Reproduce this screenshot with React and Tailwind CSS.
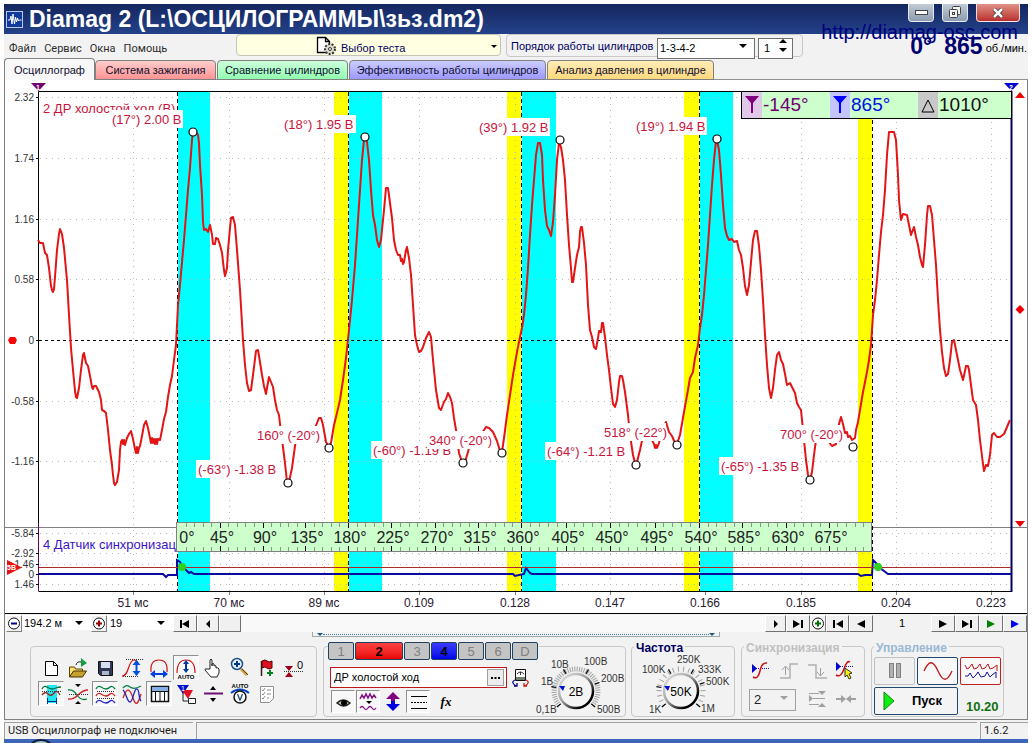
import clsx from "clsx";

const TRACE =
  "38,240 40,243 43,243 45,253 47,255 49,268 51,286 52,290 53,292 54,289 55,277 57,250 59,234 60,229 62,234 64,248 67,280 69,315 71,348 73,370 75,391 76,397 77,398 79,388 81,370 83,355 84,353 86,363 88,366 90,376 92,387 93,389 94,386 96,386 99,392 101,400 102,410 104,411 106,413 108,430 110,450 112,465 113,475 114,483 115,485 117,482 119,470 120,450 121,442 122,440 123,444 124,440 125,445 127,438 129,434 131,431 133,439 135,449 136,453 137,447 138,453 139,448 140,446 142,436 144,425 146,421 148,428 150,438 151,443 152,438 153,443 154,439 155,444 156,439 157,444 158,439 160,440 162,430 164,419 166,412 168,397 170,385 172,376 174,360 176,345 177,325 178,305 180,285 182,262 184,240 186,215 188,190 190,168 192,140 193,132 196,132 198,135 199,143 200,165 202,195 203,222 204,230 206,229 208,232 210,225 212,235 213,244 215,244 216,238 218,239 220,245 222,253 224,270 225,276 227,268 228,250 230,228 231,218 233,217 235,225 237,250 240,290 243,340 245,365 247,383 249,391 251,390 253,375 256,351 258,350 260,362 262,375 264,386 266,394 267,388 269,377 271,382 273,387 275,400 277,410 279,415 280,424 284,455 286,472 287,483 289,482 292,468 295,446 297,435 305,436 315,428 319,418 321,418 323,425 326,442 329,447 331,443 334,425 337,413 340,400 343,380 346,358 349,330 352,300 355,265 358,220 360,190 362,160 364,140 365,137 367,142 369,160 371,190 373,215 375,225 377,240 379,247 381,240 382,230 384,210 386,188 388,188 390,203 392,218 394,240 396,250 398,255 400,255 401,261 402,259 403,264 404,262 406,250 407,247 409,258 411,275 413,305 415,335 417,345 419,352 421,351 423,347 426,338 429,332 431,337 433,360 436,390 439,408 441,410 444,402 446,399 448,393 450,397 452,403 454,418 456,430 459,453 462,462 465,462 468,452 471,440 480,436 486,427 489,428 493,432 497,441 500,451 502,452 504,438 507,415 510,395 513,375 517,352 520,337 522,328 524,315 526,295 528,268 530,235 532,205 534,180 536,155 538,143 540,143 542,155 543,180 545,210 547,226 549,230 551,236 553,222 555,195 557,160 559,143 561,147 563,160 565,180 567,215 569,245 571,268 572,282 573,282 575,268 577,255 579,247 580,232 581,227 582,227 584,243 586,265 588,305 590,330 592,337 594,347 596,349 598,338 599,331 601,332 602,323 603,323 605,337 607,355 609,370 611,388 613,404 615,407 617,400 619,382 620,376 622,376 623,380 625,392 628,415 630,435 633,455 635,463 637,462 640,450 643,436 647,428 652,440 654,444 655,448 656,445 657,448 659,443 662,430 666,422 669,432 672,436 675,443 677,444 680,435 684,412 688,390 690,378 693,372 695,358 698,345 700,328 702,315 704,295 706,270 708,245 710,215 712,185 714,160 716,141 717,140 719,150 721,175 723,205 725,228 727,236 729,240 732,239 734,242 737,241 739,250 741,255 743,268 745,286 747,295 749,285 751,262 753,240 755,231 757,231 759,246 761,270 763,300 765,335 767,365 769,388 771,398 773,388 775,370 777,355 779,352 781,360 783,364 785,374 787,385 790,383 792,387 795,393 797,403 799,407 801,410 803,430 806,460 808,475 810,480 812,472 814,455 816,440 824,436 832,446 836,444 839,424 841,417 843,424 845,433 847,432 848,437 850,436 852,440 855,438 856,430 858,422 860,410 863,392 865,382 867,372 869,360 871,345 873,315 875,300 877,280 879,255 881,232 883,215 885,190 887,155 889,132 894,132 896,140 898,175 899,200 901,220 903,214 907,215 909,225 911,235 914,227 916,237 918,245 920,257 922,265 923,267 925,245 927,215 928,206 930,206 932,215 934,240 936,265 938,300 940,330 942,352 944,368 946,376 948,374 950,360 952,342 954,340 957,355 960,370 963,380 965,371 966,366 968,366 969,370 971,385 973,400 976,405 978,420 980,440 983,464 984,471 986,465 988,466 990,455 992,435 994,433 997,437 1000,437 1004,434 1007,427 1010,420";

const SYNC =
  "39,574 163,574 166,577 168,575 177,575 177,560 180,562 183,567 187,571 189,573 191,572 194,574 513,574 515,576 519,575 524,574 526,568 530,573 532,574 858,574 861,576 865,575 872,575 873,560 877,564 880,568 884,571 888,574 1011,574";

const EDGES = [177, 348, 521, 699, 872];
const CYAN = [[178, 32], [349, 33], [522, 34], [700, 33]];
const YELLOW = [[334, 14], [507, 14], [684, 15], [858, 14]];

const V_TICKS = [
  [97, "2.32"], [158, "1.74"], [219, "1.16"], [279, "0.58"], [340, "0"], [401, "-0.58"], [461, "-1.16"],
];
const SYNC_TICKS = [[533, "-5.84"], [553, "-2.92"], [564, "1.46"], [574, "0"], [584, "1.46"]];
const T_TICKS = [
  [133, "51 мс"], [229, "70 мс"], [324, "89 мс"], [419, "0.109"], [515, "0.128"],
  [610, "0.147"], [705, "0.166"], [801, "0.185"], [896, "0.204"], [991, "0.223"],
];

// x, y, width of the white plate and the text on it
const LABELS = [
  [110, 110, 73, "(17°) 2.00 В"],
  [282, 115, 74, "(18°) 1.95 В"],
  [477, 118, 73, "(39°) 1.92 В"],
  [634, 117, 73, "(19°) 1.94 В"],
  [196, 460, 82, "(-63°) -1.38 В"],
  [371, 441, 82, "(-60°) -1.19 В"],
  [545, 442, 82, "(-64°) -1.21 В"],
  [719, 457, 82, "(-65°) -1.35 В"],
  [255, 426, 64, "160° (-20°)"],
  [427, 431, 64, "340° (-20°)"],
  [602, 423, 64, "518° (-22°)"],
  [778, 425, 64, "700° (-20°)"],
];

const MARKS = [
  [193, 132], [365, 137], [560, 140], [717, 139], [288, 483], [329, 448],
  [463, 463], [502, 453], [636, 465], [677, 445], [810, 480], [853, 447],
];

const degToX = (deg) => {
  const i = Math.min(3, Math.floor(deg / 180));
  return Math.round(EDGES[i] + ((EDGES[i + 1] - EDGES[i]) * (deg - i * 180)) / 180);
};

const Ruler = () => {
  const ticks = Array.from({ length: 79 }, (_, i) => (i + 1) * 9);
  const names = Array.from({ length: 16 }, (_, i) => i * 45);
  return (
    <g>
      <rect x="176.5" y="522.5" width="695" height="29" fill="#ccffcc" stroke="#808080" />
      {ticks.map((d) => {
        const len = d % 45 === 0 ? 5 : 4;
        const color = d % 45 === 0 ? "#000" : "#8a9a8a";
        return (
          <path key={d} d={`M${degToX(d) + 0.5} 523v${len}M${degToX(d) + 0.5} 551v-${len}`} stroke={color} />
        );
      })}
      {names.map((d) => (
        <text key={d} x={d === 0 ? 187 : degToX(d) + 2} y="543" fontSize="16" textAnchor="middle" fill="#222">
          {d}°
        </text>
      ))}
    </g>
  );
};

const Chart = () => (
  <svg viewBox="5 80 1022 533" className="block w-full font-['Liberation_Sans',sans-serif]">
    {CYAN.map(([x, w]) => <rect key={x} x={x} y="92" width={w} height="499" fill="#00ffff" />)}
    {YELLOW.map(([x, w]) => <rect key={x} x={x} y="92" width={w} height="499" fill="#ffff00" />)}
    <g stroke="#b8b8b8" strokeDasharray="1 5" shapeRendering="crispEdges">
      {V_TICKS.filter(([y]) => y !== 340).map(([y]) => <path key={y} d={`M40 ${y + 0.5}H1011`} />)}
      {SYNC_TICKS.filter(([y]) => y !== 574).map(([y]) => <path key={y} d={`M40 ${y + 0.5}H1011`} />)}
      {T_TICKS.map(([x]) => <path key={x} d={`M${x + 0.5} 92V591`} />)}
    </g>
    <path d="M5 527.5H1027" stroke="#808080" />
    <path d="M39 340.5H1011" stroke="#000" strokeDasharray="3 3" />
    {EDGES.map((x) => <path key={x} d={`M${x + 0.5} 92V591`} stroke="#000" strokeDasharray="4 3" />)}
    <path d="M38.5 591V91.5H1011M38.5 591.5H1011" stroke="#000" fill="none" />
    <path d="M38.5 523V591" stroke="#600060" />
    <path d="M1011.5 91V592" stroke="#000060" strokeWidth="2" />

    <g fontSize="10" fill="#333" textAnchor="end">
      {[...V_TICKS, ...SYNC_TICKS].map(([y, t]) => (
        <g key={y}>
          <text x="34" y={y + 4}>{t}</text>
          <path d={`M36 ${y + 0.5}h3`} stroke="#000" />
        </g>
      ))}
    </g>
    <g fontSize="12" fill="#2a2030" textAnchor="middle">
      {T_TICKS.map(([x, t]) => (
        <g key={x}>
          <path d={`M${x + 0.5} 592v3`} stroke="#808080" />
          <text x={x} y="607">{t}</text>
        </g>
      ))}
    </g>

    <text x="43" y="113" fontSize="13" fill="#c8143c">2 ДР холостой ход (В)</text>
    <text x="43" y="549" fontSize="13" fill="#3c14c8">4 Датчик синхронизац</text>

    <polyline points={TRACE} fill="none" stroke="#e31414" strokeWidth="2" strokeLinejoin="round" />
    {LABELS.map(([x, y, w, t]) => (
      <g key={t}>
        <rect x={x} y={y} width={w} height="18" fill="#fff" />
        <text x={x + 2} y={y + 14} fontSize="13" fill="#c8143c">{t}</text>
      </g>
    ))}
    {MARKS.map(([x, y]) => <circle key={x} cx={x} cy={y} r="4" fill="#fff" stroke="#000" strokeWidth="1.2" />)}

    <polyline points={SYNC} fill="none" stroke="#0a0aa0" strokeWidth="2" />
    <path d="M39 567.5H1011" stroke="#b02828" shapeRendering="crispEdges" />
    <circle cx="182" cy="567" r="4" fill="#30d020" />
    <circle cx="878" cy="567" r="4" fill="#30d020" />
    <Ruler />

    <path d="M7 560L22 567.5L7 575z" fill="#e81010" />
    <text x="7" y="570" fontSize="7" fill="#fff" fontWeight="bold">5В</text>
    <path d="M8 340l2-3h5l2 3l-2 4h-5z" fill="#f00" />
    <path d="M31 83H46L38.5 91z" fill="#700070" />
    <text x="36" y="90" fontSize="7" fill="#fff" fontWeight="bold">1</text>
    <path d="M1004 83H1019L1011.5 91z" fill="#0000d0" />
    <text x="1009" y="90" fontSize="7" fill="#fff" fontWeight="bold">2</text>
    <path d="M1020 92l5 6h-10zM1020 305l4.500 4.500l-4.500 4.500l-4.500-4.500zM1020 527l-5-6h10z" fill="#f00000" />
  </svg>
);

const READOUTS = [
  { value: "-145°", box: "bg-[#e0c8e8]", text: "text-[#700070]", path: "M3 3h14l-6 7v10h-2v-10z", fill: "#800080", w: "w-[88px]" },
  { value: "865°", box: "bg-[#c4c4ff]", text: "text-[#0010e0]", path: "M3 3h14l-6 7v10h-2v-10z", fill: "#0000ff", w: "w-[88px]" },
  { value: "1010°", box: "bg-[#c8c8c8]", text: "text-[#101010]", path: "M10 7l6 12h-12z", fill: "none", w: "w-[93px]" },
];

const Readout = () => (
  <div className="absolute top-[11px] right-[15px] flex h-[28px] border border-black bg-[#ccffcc]">
    {READOUTS.map((r) => (
      <div key={r.value} className={clsx("flex", r.w)}>
        <div className={clsx("w-5 shrink-0", r.box)}>
          <svg width="20" height="24" viewBox="0 0 20 22">
            <path d={r.path} fill={r.fill} stroke={r.fill === "none" ? "#000" : "none"} />
          </svg>
        </div>
        <span className={clsx("pl-px text-[19px] leading-[26px]", r.text)}>{r.value}</span>
      </div>
    ))}
  </div>
);

const AppLogo = () => (
  <svg width="17" height="17" viewBox="0 0 17 17" className="mr-[6px] shrink-0">
    <rect x="0.500" y="0.500" width="16" height="16" fill="#103a9c" stroke="#b8c8f0" />
    <path d="M2 9h2l1-4 1 8 1-10 1.500 10 1-7 1 5 1-4 1 3 1-1h2" fill="none" stroke="#fff" />
  </svg>
);

const TitleBar = () => (
  <header className="flex h-[30px] items-center bg-linear-to-b from-[#14265f] to-[#24428a] pl-[2px]">
    <AppLogo />
    <h1 className="min-w-0 flex-1 truncate text-[23px] leading-[30px] font-bold text-white">
      Diamag 2 (L:\ОСЦИЛОГРАММЫ\зьз.dm2)
    </h1>
    <div className="flex gap-2 self-start pr-2">
      <button aria-label="Свернуть" className="flex h-[18px] w-[26px] items-center justify-center rounded-b border border-t-0 border-white/70 bg-linear-to-b from-[#c2ccd6] to-[#8d9cb0]">
        <svg width="13" height="6"><rect x="0.500" y="0.500" width="12" height="4" fill="#fff" stroke="#444" /></svg>
      </button>
      <button aria-label="Развернуть" className="flex h-[18px] w-[26px] items-center justify-center rounded-b border border-t-0 border-white/70 bg-linear-to-b from-[#c2ccd6] to-[#8d9cb0]">
        <svg width="13" height="13" fill="#f4f4f4" stroke="#444">
          <rect x="3.500" y="0.500" width="8" height="8" rx="1" />
          <rect x="0.500" y="3.500" width="8" height="8" rx="1" />
          <rect x="3.500" y="6.500" width="2" height="2" fill="none" />
        </svg>
      </button>
      <button aria-label="Закрыть" className="flex h-[18px] w-[44px] items-center justify-center rounded-b border border-t-0 border-white/80 bg-linear-to-b from-[#e09088] to-[#b82c2c]">
        <svg width="12" height="10"><path d="M2 1l8 8M10 1l-8 8" stroke="#333" strokeWidth="4" /><path d="M2 1l8 8M10 1l-8 8" stroke="#fff" strokeWidth="2.500" /></svg>
      </button>
    </div>
  </header>
);

const Arrow = ({ className }) => (
  <svg width="8" height="4" viewBox="0 0 8 4" className={clsx("pointer-events-none absolute", className)}>
    <path d="M0 0h8l-4 4z" fill="currentColor" />
  </svg>
);

const MenuRow = () => (
  <div className="flex h-6 items-start">
    <nav className="flex w-[232px] gap-[8px] pt-[7px] pl-[5px] text-[11px] leading-4 text-[#2c2c2c] font-['Roboto',sans-serif]">
      {["Файл", "Сервис", "Окна", "Помощь"].map((m) => (
        <button key={m}>{m}</button>
      ))}
    </nav>
    <div className="relative h-[22px] w-[265px] rounded border border-[#c4c4b8] bg-[#ffffe1]">
      <svg width="22" height="20" viewBox="0 0 22 20" className="pointer-events-none absolute top-[1px] left-[79px]">
        <path d="M1.500 1.500h8l4 4v11h-12zM9.500 1.500v4h4" fill="#fff" stroke="#000" strokeWidth="1.300" />
        <circle cx="14" cy="13" r="5" fill="#dcdcc8" stroke="#333" strokeWidth="2" strokeDasharray="2 1.500" />
        <circle cx="14" cy="13" r="1.500" fill="#fff" stroke="#333" />
      </svg>
      <select aria-label="Выбор теста" className="h-5 w-full appearance-none pl-[104px] text-[11px] text-[#000060]">
        <option>Выбор теста</option>
      </select>
      <Arrow className="top-[10px] right-[3px] h-[3px] w-[6px]" />
    </div>
    <div className="ml-[5px] flex h-[23px] w-[297px] rounded border border-[#c8c8c8] pl-1">
      <label htmlFor="order" className="w-[146px] text-[11px] leading-[22px] whitespace-nowrap text-[#000060]">
        Порядок работы цилиндров
      </label>
      <div className="relative">
        <select id="order" className="h-[21px] w-[98px] appearance-none border border-[#707070] bg-white pl-[2px] text-[11px]">
          <option>1-3-4-2</option>
        </select>
        <Arrow className="top-[9px] right-[8px]" />
      </div>
      <div className="relative ml-[3px]">
        <input aria-label="Номер цилиндра" defaultValue="1" className="h-[21px] w-[35px] border border-[#707070] bg-white pl-[5px] text-[11px]" />
        <svg width="8" height="13" className="pointer-events-none absolute top-[4px] right-[6px]">
          <path d="M0 4h8l-4-4zM0 9h8l-4 4z" />
        </svg>
      </div>
    </div>
    <div className="flex flex-1 justify-end text-[#000070]">
      <span className="mr-3 text-[23px] leading-6 font-bold">0°</span>
      <span className="text-[23px] leading-6 font-bold">865</span>
      <span className="pt-[6px] pr-px pl-[3px] text-[11px] leading-4 whitespace-nowrap text-black">об./мин.</span>
    </div>
  </div>
);

const TABS = [
  { name: "Осциллограф", style: "h-[22px] w-[91px] bg-[#f8f8f8]" },
  { name: "Система зажигания", style: "h-5 w-[121px] border-b bg-linear-to-b from-[#ffcccc] to-[#ff9494]" },
  { name: "Сравнение цилиндров", style: "ml-px h-5 w-[131px] border-b bg-linear-to-b from-[#ccffdd] to-[#90ffb0]" },
  { name: "Эффективность работы цилиндров", style: "ml-px h-5 w-[197px] border-b bg-linear-to-b from-[#ccccff] to-[#9c98ff]" },
  { name: "Анализ давления в цилиндре", style: "ml-px h-5 w-[167px] border-b bg-linear-to-b from-[#ffecb8] to-[#ffd97c]" },
];

const Tabs = () => (
  <div role="tablist" className="flex h-[22px] items-end shadow-[inset_0_-1px_0_#909090]">
    {TABS.map((t) => (
      <button
        key={t.name}
        role="tab"
        className={clsx("shrink-0 rounded-t border-x border-t border-[#808080] text-[11px] leading-[18px] whitespace-nowrap text-[#101030]", t.style)}
      >
        {t.name}
      </button>
    ))}
  </div>
);

const NavButton = ({ label, path, color = "#000", className }) => (
  <button
    aria-label={label}
    className={clsx("flex h-[17px] shrink-0 items-center justify-center border border-t-white border-l-white border-r-[#707070] border-b-[#707070] bg-[#f0f0f0]", className)}
  >
    <svg width="12" height="8" viewBox="0 0 12 8"><path d={path} fill={color} /></svg>
  </button>
);

const RoundButton = ({ label, plus, color }) => (
  <button aria-label={label} className="h-[17px] w-4 shrink-0 border border-t-white border-l-white border-r-[#808080] border-b-[#808080]">
    <svg width="14" height="15" viewBox="0 0 14 15">
      <circle cx="7" cy="7.500" r="5.500" fill="#fff" stroke="#111" />
      <path d={plus ? "M4 7.500h6M7 4.500v6" : "M4 7.500h6"} stroke={color} strokeWidth="2" />
    </svg>
  </button>
);

const ScrollRow = () => (
  <div className="flex h-[18px] items-start border-t border-black pt-px pl-px text-[11px]">
    <RoundButton label="Сжать" color="#000080" />
    <div className="relative">
      <select aria-label="Длительность" className="h-[15px] w-[69px] appearance-none bg-white pl-[2px]"><option>194.2 м</option></select>
      <Arrow className="top-[6px] right-[8px]" />
    </div>
    <RoundButton label="Растянуть" plus color="#900000" />
    <div className="relative">
      <select aria-label="Масштаб" className="h-[15px] w-[66px] appearance-none bg-white pl-[3px]"><option>19</option></select>
      <Arrow className="top-[6px] right-[8px]" />
    </div>
    <NavButton label="В начало" className="w-6" path="M1 0h2v8h-2zM10 0v8l-7-4z" />
    <NavButton label="Назад" className="w-[22px]" path="M8 0v8l-4-4z" />
    <NavButton label="Ползунок" className="w-[22px]" path="" />
    <div className="h-[17px] flex-1 bg-[#f9f9f9]" />
    <NavButton label="Вперёд" className="w-[21px]" path="M4 0v8l4-4z" />
    <NavButton label="В конец" className="w-[24px]" path="M1 0v8l7-4zM9 0h2v8h-2z" />
    <RoundButton label="Добавить кадр" plus color="#007000" />
    <NavButton label="Первый кадр" className="w-[23px]" path="M1 0h2v8h-2zM11 0v8l-7-4z" />
    <NavButton label="Предыдущий кадр" className="w-[24px]" path="M10 0v8l-8-4z" />
    <span className="w-[58px] text-center leading-[17px]">1</span>
    <NavButton label="Следующий кадр" className="w-6" path="M2 0v8l8-4z" />
    <NavButton label="Последний кадр" className="w-6" path="M1 0v8l7-4zM9 0h2v8h-2z" />
    <NavButton label="Воспроизвести" className="w-6" color="#008000" path="M2 0v8l8-4z" />
    <NavButton label="Повтор" className="w-6" color="#0000f0" path="M2 0v8l8-4z" />
  </div>
);

const Auto = ({ y }) => <text x="13" y={y} fontSize="6" fontWeight="bold" textAnchor="middle">AUTO</text>;

const TOOLS = [
  { name: "Новый", icon: <path d="M7.500 6.500h8l4 4v10h-12zM15.500 6.500v4h4" fill="#fff" stroke="#000" /> },
  { name: "Открыть", icon: <><path d="M4.500 22v-10h5l1 2h7v3" fill="#ffe070" stroke="#554400" /><path d="M4.500 22l4-6h13l-4 6z" fill="#c8a030" stroke="#443300" /><path d="M16 3l6 5-6 4z" fill="#10a040" /><path d="M11 10q1-4 5-3" fill="none" stroke="#222" /></> },
  { name: "Сохранить", icon: <><path d="M6.500 6.500h14v14h-12l-2-2z" fill="#303858" stroke="#111" /><path d="M9 7h9v6h-9z" fill="#d8e0f0" /><path d="M10 16h7v4h-7z" fill="#b0b8c8" /></> },
  { name: "Амплитуда", icon: <><path d="M7 4.500h18M4 21.500h16" stroke="#333" strokeDasharray="1 1" /><path d="M3 21c7 1 6-16 12-16q3 0 4 4" fill="none" stroke="#d01010" strokeWidth="1.200" /><path d="M17.500 5l4 5h-3v6h3l-4 5-4-5h3v-6h-3z" fill="#0050e0" /></> },
  { name: "Период", icon: <><path d="M5 17q-1-12 8-12t8 12" fill="none" stroke="#d01010" strokeWidth="1.200" /><path d="M4 19l5-4v3h8v-3l5 4-5 4v-3h-8v3z" fill="#0040e0" /></> },
  { name: "Автомасштаб", on: true, icon: <><path d="M4 18q0-13 9-13t9 13" fill="none" stroke="#d01010" strokeWidth="1.200" /><path d="M13 5l3 4h-2v5h2l-3 4-3-4h2v-5h-2z" fill="#0038a0" /><Auto y="24" /></> },
  { name: "Рука", icon: <path d="M9 14v-9q1-2 2 0v6v-2q1-1 2 0v2q1-1 2 0v2q2-1 3 1v4l-2 4h-6l-6-7q0-2 2-1z" fill="#fff" stroke="#222" transform="translate(1)" /> },
  { name: "Лупа", icon: <><path d="M14 14l6 6" stroke="#d0a040" strokeWidth="3" /><path d="M15 14l6 6" stroke="#604010" /><circle cx="10" cy="9" r="5.500" fill="#dff0ff" stroke="#205080" strokeWidth="1.500" /><path d="M7 9h6M10 6v6" stroke="#003a90" strokeWidth="2" /></> },
  { name: "Метка", icon: <><path d="M7.500 6v15" stroke="#222" strokeWidth="1.500" /><path d="M8 6q3-2 5 0t5 0v7q-3 2-5 0t-5 0z" fill="#e01020" stroke="#500" /><path d="M13 18h6M16 15v6" stroke="#008020" strokeWidth="2" /></> },
  { name: "Ноль", icon: <><path d="M4 11h8l-4 5zM4 22h8l-4-5z" fill="#a00018" /><path d="M3 16.500h19" stroke="#333" strokeDasharray="1 1" /><text x="16" y="14" fontSize="11">0</text></> },
  { name: "Фазы", on: true, icon: <><path d="M9 4h10v18h-10z" fill="#20e8f0" /><path d="M4 8q2-4 5-2t5 2 4-1 5-1" fill="none" stroke="#007040" strokeWidth="1.300" /><path d="M4 14q3-4 6-1t6-1 6 2" fill="none" stroke="#902020" strokeWidth="1.300" /><path d="M4 10.500h19" stroke="#333" strokeDasharray="1 1" /><path d="M9 20.500h10M9.500 17v6M18.500 17v6" stroke="#003090" /></> },
  { name: "Наложение", icon: <><path d="M4 13.500h20" stroke="#333" strokeDasharray="1 1" /><path d="M3 9q5-1 9 5t10 4" fill="none" stroke="#008040" strokeWidth="1.300" /><path d="M3 18q5 1 10-4t10-5" fill="none" stroke="#d02020" strokeWidth="1.300" /><path d="M10 3h6l-3 3zM10 23h6l-3-3z" /></> },
  { name: "Раздельно", on: true, icon: <><path d="M4 8q2-4 5-2t5 2 4-2 5 2" fill="none" stroke="#008040" strokeWidth="1.300" /><path d="M4 15q2-4 5-2t5 2 4-2 5 2" fill="none" stroke="#d02020" strokeWidth="1.300" /><path d="M4 22q2-4 5-2t5 2 4-2 5 2" fill="none" stroke="#2020c0" strokeWidth="1.300" /><path d="M5 10.500h17M5 17.500h17" stroke="#333" strokeDasharray="1 1" /></> },
  { name: "Вместе", icon: <><path d="M4 7q3-4 7-1t11-1" fill="none" stroke="#008040" strokeWidth="1.300" /><path d="M4 17c4-12 7-9 10 0s5 6 8-4" fill="none" stroke="#d02020" strokeWidth="1.300" /><path d="M4 9c3 2 4 12 7 12s4-14 7-13 1 9 4 12" fill="none" stroke="#2020c0" strokeWidth="1.300" /></> },
  { name: "Таблица", on: true, icon: <><path d="M5.500 5.500h17v15h-17z" fill="#fff" stroke="#111" strokeWidth="1.500" /><path d="M6 6h16v4h-16z" fill="#88b0e0" /><path d="M5 10.500h17M9.500 10v10M14 10v10M18.500 10v10" stroke="#111" /></> },
  { name: "Курсоры", icon: <><path d="M4 4h12l-6 9z" fill="#0010d0" /><path d="M9 9h11l-5 9z" fill="#e01020" /><path d="M10 12v8h5" fill="none" stroke="#222" /><path d="M15.500 17.500h7v5h-7z" fill="#fff" stroke="#222" /><text x="8" y="10" fontSize="7" fill="#fff">1</text></> },
  { name: "Смещение", icon: <><path d="M4 12.500h19" stroke="#701070" strokeWidth="2" /><path d="M10 9h6l-3-4zM10 17h6l-3 4z" /></> },
  { name: "Авторучка", icon: <><Auto y="7" /><path d="M4 12q9-7 18 0" fill="none" stroke="#0040c0" strokeWidth="2" /><circle cx="13" cy="16" r="6" fill="#fff" stroke="#111" strokeWidth="1.500" /><path d="M10.500 13l2.500 6 2.500-6" fill="none" stroke="#205080" strokeWidth="1.300" /></> },
  { name: "Отчёт", icon: <><path d="M6.500 5.500h13v12l-4 4h-9z" fill="#fff" stroke="#909090" /><path d="M8 9l1 1 2-3M8 13l1 1 2-3M8 17l1 1 2-3M13 9h4M13 13h4M13 17h2" fill="none" stroke="#888" /></> },
];

const Panel = ({ title, titleClass, className, children }) => (
  <fieldset className={clsx("relative h-[71px] shrink-0 rounded border border-[#c8c8c8]", className)}>
    {title && (
      <span className={clsx("absolute -top-[6px] left-[2px] bg-[#f2f2f2] px-[2px] text-xs leading-[14px] font-bold", titleClass)}>
        {title}
      </span>
    )}
    {children}
  </fieldset>
);

const IconButton = ({ label, on, className, children }) => (
  <button
    aria-label={label}
    className={clsx("border", on ? "border-t-[#909090] border-l-[#909090] border-r-white border-b-white bg-[#f8f8f8]" : "border-transparent", className)}
  >
    {children}
  </button>
);

const CHANNELS = [
  ["1", "w-[26px] bg-[#c4c4c4] text-[#808080]"],
  ["2", "w-[48px] bg-linear-to-b from-[#ff4040] to-[#e80000] font-bold text-black"],
  ["3", "w-[26px] bg-[#c4c4c4] text-[#808080]"],
  ["4", "w-[26px] bg-linear-to-b from-[#3838ff] to-[#0000e8] font-bold text-black"],
  ["5", "w-[26px] bg-[#c4c4c4] text-[#808080]"],
  ["6", "w-[26px] bg-[#c4c4c4] text-[#808080]"],
  ["D", "w-[26px] bg-[#c4c4c4] text-[#808080]"],
];

const Knob = ({ id, cx, cy, value, labels, ticks }) => (
  <g>
    <defs>
      <linearGradient id={id} x1="0" y1="0" x2="1" y2="1">
        <stop offset="0" stopColor="#e8e8e8" />
        <stop offset="0.450" stopColor="#a0a0a0" />
        <stop offset="0.800" stopColor="#000" />
      </linearGradient>
    </defs>
    {Array.from({ length: ticks }, (_, i) => {
      const a = -220 + (260 * i) / (ticks - 1);
      return <path key={i} d="M19.500 0h5" stroke="#a0a0a0" transform={`translate(${cx} ${cy}) rotate(${a})`} />;
    })}
    {[-220, -170, -120, -60, -20, 40].map((a) => (
      <path key={a} d="M20 0h5" stroke="#000" strokeWidth="1.200" transform={`translate(${cx} ${cy}) rotate(${a})`} />
    ))}
    <circle cx={cx} cy={cy} r="17" fill="#f4f4f4" stroke={`url(#${id})`} strokeWidth="2.500" />
    <path d={`M${cx - 17} ${cy - 5}l6 0l-2 5z`} fill="#0010d0" />
    <text x={cx} y={cy + 5} fontSize="12" textAnchor="middle">{value}</text>
    <g fontSize="10" fill="#333">
      {labels.map(([x, y, t]) => <text key={t} x={x} y={y}>{t}</text>)}
    </g>
  </g>
);

const ChannelPanel = () => (
  <Panel className="flex w-[303px]">
    <div className="-mt-[5px] ml-[4px] w-[211px] shrink-0">
      <div className="flex gap-px bg-[#f2f2f2]">
        {CHANNELS.map(([n, style]) => (
          <button key={n} className={clsx("h-[18px] rounded-xs border border-[#204060] text-[13px] leading-[15px]", style)}>{n}</button>
        ))}
      </div>
      <div className="mt-[7px] ml-[2px] flex items-center">
        <div className="flex h-[21px] w-[177px] items-center border border-[#c01818] bg-white pr-[2px]">
          <input aria-label="Название канала" defaultValue="ДР холостой ход" className="min-w-0 flex-1 pl-[3px] text-[11px]" />
          <button aria-label="Выбрать датчик" className="flex h-[17px] w-[17px] items-center justify-center border border-[#a0a0a0] bg-[#ececec]">
            <svg width="9" height="2"><path d="M0 0h2v2h-2zM3.500 0h2v2h-2zM7 0h2v2h-2z" /></svg>
          </button>
        </div>
        <button aria-label="Прибор" className="ml-1">
          <svg width="20" height="20" viewBox="0 0 20 20">
            <path d="M4.500 1.500h10v11h-10z" fill="#fff" stroke="#111" />
            <path d="M5 9h9v3h-9z" fill="#708070" />
            <path d="M6 6q3.500-4 7 0M9.500 7v-3" fill="none" stroke="#333" />
            <path d="M4 12q-5 2 1 6M3 18h3v-3" fill="none" stroke="#000080" strokeWidth="1.300" />
            <path d="M15 12q5 2-1 6M16 18h-3v-3" fill="none" stroke="#d01010" strokeWidth="1.300" />
          </svg>
        </button>
      </div>
      <div className="mt-[2px] ml-[3px] flex gap-px">
        <IconButton label="Видимость" on className="h-[23px] w-6">
          <svg width="22" height="21"><path d="M5 12q6-6 13 0q-6 6-13 0z" fill="#c0c0b0" stroke="#222" strokeWidth="1.500" /><circle cx="12" cy="12" r="3" /></svg>
        </IconButton>
        <IconButton label="Фильтр" on className="h-[23px] w-6">
          <svg width="22" height="21" fill="none"><path d="M3 8l2-4 2 3 2-4 2 4 2-4 2 4 2-3 2 3" stroke="#801080" strokeWidth="1.500" /><path d="M9 10h6l-3 3z" fill="#000" /><path d="M3 17q2-3 4 0t4 0 4 0 4 0" stroke="#801080" strokeWidth="1.300" /></svg>
        </IconButton>
        <IconButton label="Инверсия" className="h-[23px] w-6">
          <svg width="22" height="21"><path d="M11 1l7 7h-5v3h-4v-3h-5z" fill="#800080" /><path d="M11 20l7-7h-5v-3h-4v3h-5z" fill="#0000e0" /></svg>
        </IconButton>
        <IconButton label="Уровни" on className="h-[23px] w-6">
          <svg width="22" height="21"><path d="M4 5.500h16M4 17.500h16" stroke="#000" /><path d="M4 11.500h16" stroke="#000" strokeDasharray="2 1" /></svg>
        </IconButton>
        <IconButton label="Функция" className="h-[23px] w-6">
          <span className="ml-[6px] block font-['Liberation_Serif',serif] text-[13px] leading-[20px] font-bold italic">fx</span>
        </IconButton>
      </div>
    </div>
    <svg width="85" height="69" viewBox="539 647 85 69" className="shrink-0 overflow-visible font-['Liberation_Sans',sans-serif]">
      <Knob
        id="volt" cx={576} cy={691} value="2В" ticks={44}
        labels={[[536, 713, "0,1В"], [541, 685, "1В"], [551, 668, "10В"], [584, 665, "100В"], [601, 682, "200В"], [597, 713, "500В"]]}
      />
    </svg>
  </Panel>
);

const SyncIcon = ({ children }) => <svg width="24" height="22" viewBox="0 0 24 22" fill="none">{children}</svg>;

const SyncPanel = () => (
  <Panel title="Синхронизация" titleClass="text-[#c0c0c0]" className="w-[124px]">
    <div className="flex gap-[4px] pt-[13px] pl-[6px]">
      <button aria-label="Уровень"><SyncIcon><path d="M4 8.500h17" stroke="#1818d0" strokeDasharray="1 1" /><path d="M4 4v9l5-4.500z" fill="#0000d0" /><path d="M5 17q5 3 7-6t7-8" stroke="#d01010" strokeWidth="1.500" /></SyncIcon></button>
      <button aria-label="Фронт"><SyncIcon><path d="M4 18h10v-14h8" stroke="#b0b0b0" strokeWidth="1.500" /><path d="M9.500 15v-8M6 10l3.500-4 3.500 4" stroke="#a0a0a0" /></SyncIcon></button>
      <button aria-label="Спад"><SyncIcon><path d="M4 5h8v13h11" stroke="#b0b0b0" strokeWidth="1.500" /><path d="M16.500 8v8M13 12l3.500 4 3.500-4" stroke="#a0a0a0" /></SyncIcon></button>
      <button aria-label="Автоуровень"><SyncIcon><path d="M4 6.500h17" stroke="#1818d0" strokeDasharray="1 1" /><path d="M4 2v9l5-4.500z" fill="#0000d0" /><path d="M4 15q5 3 8-6t6-7" stroke="#d01010" strokeWidth="1.500" /><path d="M13 8l7 5-3 1 2 4-2 1-2-4-2 2z" fill="#fff000" stroke="#333" /></SyncIcon></button>
    </div>
    <div className="mt-[5px] ml-[7px] flex items-center">
      <div className="relative text-[#a0a0a0]">
        <select aria-label="Канал синхронизации" className="h-[22px] w-[47px] appearance-none border border-[#a0a0a0] pl-1 text-[13px] text-[#222]"><option>2</option></select>
        <Arrow className="top-[9px] right-[8px]" />
      </div>
      <svg width="62" height="20" viewBox="0 0 62 20" className="text-[#a0a0a0]" fill="currentColor">
        <path d="M13 6v7l4-3.500zM22 2h8l-4 4zM22 18h8l-4-4zM40 9h5v-3l5 4-5 4v-3h-5zM60 9h-5v-3l-5 4 5 4v-3h5z" />
        <path d="M13 4.500h10M13 15.500h10M17 9.500h12" stroke="currentColor" />
      </svg>
    </div>
  </Panel>
);

const ControlPanel = () => (
  <Panel title="Управление" titleClass="text-[#9ab8d4]" className="w-[133px]">
    <div className="grid grid-cols-[41px_41px_41px] gap-x-[2px] gap-y-[2px] pt-[10px] pl-[2px]">
      <button aria-label="Пауза" className="flex h-[28px] items-center justify-center rounded-xs border border-[#c0c0c0] bg-[#f0f0f0]">
        <svg width="12" height="16" fill="#b0b0b0" stroke="#808080"><rect x="0.500" y="0.500" width="4" height="14" /><rect x="7.500" y="0.500" width="4" height="14" /></svg>
      </button>
      <button aria-label="Осциллограмма" className="flex items-center justify-center rounded-xs border border-[#204870] bg-[#f8f8f8]">
        <svg width="32" height="22" viewBox="0 0 32 22" fill="none"><path d="M2 11c5-11 9-11 14 0s9 11 14 0" stroke="#c01818" strokeWidth="1.300" /></svg>
      </button>
      <button aria-label="Запись" className="flex items-center justify-center rounded-xs border border-[#c02020] bg-[#f8f8f8]">
        <svg width="36" height="22" viewBox="0 0 36 22" fill="none"><path d="M2 5l2 4 2-1 3-4 2 5 3-1 3-4 2 5 3-1 3-4 2 5 3-1 4-3v6" stroke="#c01818" /><path d="M2 16h3l2-3 3 5 3-3 2-3 3 5 4-1 2-4 3 5 2-2 4-3v6" stroke="#1010a0" /></svg>
      </button>
      <button className="col-span-2 flex h-[28px] items-center rounded-xs border border-[#204870] bg-[#f4f4f4] pl-2 text-[13px] font-bold">
        <svg width="12" height="20"><path d="M1 1l10 9-10 9z" fill="#10f010" stroke="#108010" /></svg>
        <span className="pl-[17px]">Пуск</span>
      </button>
      <span className="self-end pb-px pl-[6px] text-[13px] leading-[14px] font-bold text-[#107010]">10.20</span>
    </div>
  </Panel>
);

const App = () => (
  <div className="w-full bg-white px-1 pt-1 text-black font-['Liberation_Sans',sans-serif]">
    <div className="relative bg-[#f2f2f2]">
      <TitleBar />
      <MenuRow />
      <a href="http://diamag-osc.com" className="absolute top-[16px] right-[10px] text-[20px] leading-6 text-[#000080]">
        http://diamag-osc.com
      </a>
      <Tabs />
      <main className="relative border-x border-[#808080] bg-white">
        <Chart />
        <Readout />
      </main>
      <div className="border-x border-b border-[#808080] pb-[2px]">
        <ScrollRow />
        <div className="ml-[307px] flex h-[6px] w-[408px] items-center border border-[#a0a8b0] px-1">
          <svg width="6" height="3" fill="#205878"><path d="M0 0h6l-3 3z" /></svg>
          <div className="flex-1 border-t border-dotted border-[#4080a0]" />
          <svg width="6" height="3" fill="#205878"><path d="M0 0h6l-3 3z" /></svg>
        </div>
        <div className="mt-[9px] flex gap-[6px] pl-[25px]">
          <Panel className="w-[287px] pt-[8px] pl-[7px]">
            <div className="grid grid-cols-[repeat(10,27px)] gap-y-px">
              {TOOLS.map((t) => (
                <IconButton key={t.name} label={t.name} on={t.on} className="h-[25px] w-[26px]">
                  <svg width="24" height="23" viewBox="1 1 24 23" className="overflow-visible">{t.icon}</svg>
                </IconButton>
              ))}
            </div>
          </Panel>
          <ChannelPanel />
          <Panel title="Частота" titleClass="text-[#000060]" className="-ml-px w-[104px]">
            <svg width="102" height="69" viewBox="632 647 102 69">
              <Knob
                id="freq" cx={681} cy={691} value="50K" ticks={20}
                labels={[[649, 713, "1K"], [642, 673, "100K"], [677, 663, "250K"], [698, 673, "333K"], [706, 685, "500K"], [701, 712, "1M"]]}
              />
            </svg>
          </Panel>
          <SyncPanel />
          <ControlPanel />
        </div>
      </div>
      <footer className="flex h-[19px] gap-[3px] pt-[2px] text-[11px] leading-[16px] text-[#222] font-['Roboto',sans-serif]">
        <span className="w-[189px] border-t border-l border-[#a0a0a0] pl-[3px] whitespace-nowrap">USB Осциллограф не подключен</span>
        <span className="flex-1 border-t border-l border-[#a0a0a0]" />
        <span className="w-[48px] border-t border-l border-[#a0a0a0] pl-[3px]">1.6.2</span>
      </footer>
    </div>
    <div className="h-[5px] overflow-hidden bg-[#3c64b8] pl-[22px]">
      <div className="h-[30px] w-[30px] rounded-full border-2 border-[#102040] bg-[#a8c8e0]" />
    </div>
  </div>
);

export default App;
